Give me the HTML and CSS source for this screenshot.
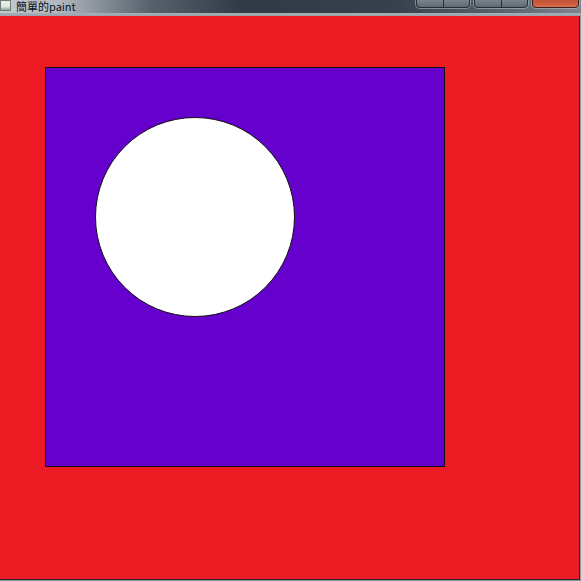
FILE: index.html
```html
<!DOCTYPE html>
<html lang="zh-Hant">
<head>
    <meta charset="UTF-8">
    <meta name="viewport" content="width=device-width, initial-scale=1.0">
    <link rel="stylesheet" href="styles.css">
    <title>簡單的paint</title>
</head>
<body>
    <div class="window">
        <div class="titlebar">
            <div class="title">
                <span class="app-icon"></span>
                <span class="title-text">簡單的paint</span>
            </div>
            <div class="controls">
                <div class="btn-group">
                    <span class="btn"></span>
                    <span class="btn"></span>
                </div>
                <div class="btn-group">
                    <span class="btn"></span>
                    <span class="btn"></span>
                </div>
                <span class="btn btn-close"></span>
            </div>
        </div>
        <div class="frame-strip"></div>
        <div class="canvas">
            <div class="square">
                <div class="circle"></div>
            </div>
        </div>
    </div>
</body>
</html>
```

FILE: styles.css
```css
*{box-sizing: border-box; margin: 0; padding: 0;}

body{width: 581px; height: 581px; overflow: hidden; background: #8e969e; font-family: "Noto Sans CJK TC", "Liberation Sans", sans-serif;}

.window{width: 581px; height: 581px; display: flex; flex-direction: column;}

.titlebar{height: 13px; display: flex; justify-content: space-between; overflow: hidden; background: linear-gradient(90deg, #c4c9ce 0%, #b2b8bf 10%, #56616c 26%, #2f3a46 42%, #36414d 68%, #5b6671 88%, #7d868f 100%);}
.title{display: flex; align-items: flex-start; gap: 5px;}
.app-icon{width: 11px; height: 11px; background: linear-gradient(180deg, #e8f0e8 0%, #dfe8df 60%, #88a890 100%); border: 1px solid #6c7a78;}
.title-text{font-size: 11px; line-height: 12px; color: #0a1020;}

.controls{display: flex; gap: 4px; padding-right: 2px; margin-top: -5px;}
.btn-group{display: flex; border: 1px solid #27303a; border-radius: 0 0 4px 4px; height: 13px; background: linear-gradient(180deg, #8a939c, #5f6973); box-shadow: 0 0 0 1px rgba(210,218,226,0.45);}
.btn{width: 26px; height: 100%;}
.btn-group .btn + .btn{border-left: 1px solid #27303a;}
.btn-close{width: 47px; height: 13px; border: 1px solid #3a1e18; border-radius: 0 0 4px 4px; background: linear-gradient(180deg, #b8533a, #c9553a 60%, #d47050); box-shadow: 0 0 0 1px rgba(220,200,190,0.45);}

.frame-strip{height: 3px; background: linear-gradient(180deg, #a9b1b8, #98a0a8);}

.canvas{width: 580px; height: 564px; background: #ed1c24; border-right: 1px solid #222; border-bottom: 1px solid #222; padding: 51px 0 0 45px;}

.square{width: 400px; height: 400px; background: #6600cc; border: 1px solid #111; padding: 49px 0 0 49px;}
.circle{width: 200px; height: 200px; border-radius: 50%; background: #fff; border: 1px solid #111;}
```
